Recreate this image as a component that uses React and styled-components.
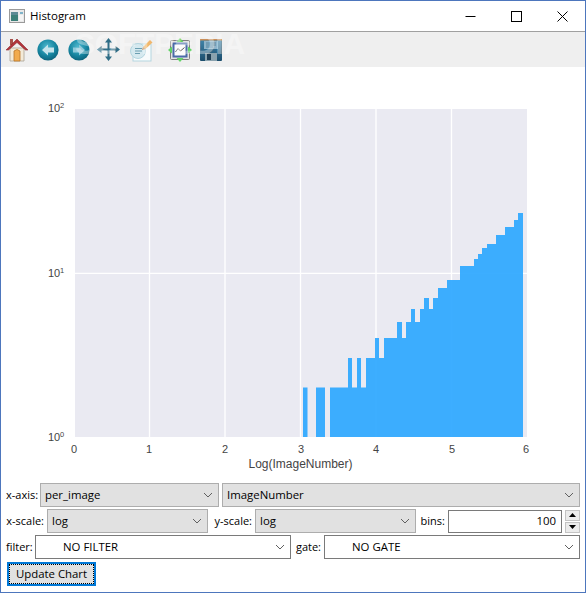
import styled, { createGlobalStyle } from 'styled-components'

const GlobalStyle = createGlobalStyle`
  html, body { margin: 0; padding: 0; background: #fff; }
  body { font-family: "Open Sans", "Noto Sans", sans-serif; font-size: 11px; color: #000; }
`

// [left edge, right edge, top] of each run of bars, read off the plot
const BARS = [
  [303, 307.5, 387.5], [316, 325, 387.5], [330, 348, 387.5], [348, 352, 358], [352, 357, 387.5],
  [357, 361, 358], [361, 366, 387.5], [366, 375, 358], [375, 379, 338], [379, 384, 358],
  [384, 397, 338], [397, 402, 322], [402, 406, 338], [406, 411, 322], [411, 415, 309],
  [415, 420, 322], [420, 424, 309], [424, 429, 298], [429, 433, 309], [433, 438, 298],
  [438, 447, 288], [447, 460, 280], [460, 474, 266], [474, 478, 259], [478, 482, 254],
  [482, 487, 248], [487, 496, 244], [496, 505, 235], [505, 514, 227], [514, 518, 220],
  [518, 523, 213],
]
const GRID_X = [149.5, 225, 300.5, 376, 451.5]
const X_LABELS = [[74, 0], [149, 1], [225, 2], [301, 3], [376, 4], [452, 5], [526, 6]]
const PLOT_BOTTOM = 437

const Window = styled.div`
  width: 586px;
  height: 593px;
  box-sizing: border-box;
  border: 1px solid #4d76bd;
  display: flex;
  flex-direction: column;
  position: relative;
  overflow: hidden;
  background: #fff;
`

const TitleBar = styled.div`
  height: 30px;
  flex: none;
  display: flex;
  align-items: center;
  padding-left: 8px;
  border-bottom: 1px solid #a0a0a0;
  background: #fff;
`

const TitleText = styled.div`
  margin-left: 5px;
  padding-bottom: 1px;
  font-size: 11.5px;
  color: #000;
`

const WinButtons = styled.div`
  margin-left: auto;
  display: flex;
  height: 100%;
`

const WinButton = styled.div`
  width: 46px;
  display: flex;
  align-items: center;
  justify-content: center;
`

const Toolbar = styled.div`
  height: 35px;
  flex: none;
  display: flex;
  align-items: center;
  background: #efefef;
`

const ToolButton = styled.div`
  width: 31px;
  height: 35px;
  display: flex;
  align-items: center;
  justify-content: center;
`

const ToolSep = styled.div`
  width: 8px;
`

const Watermark = styled.div`
  position: absolute;
  left: 74px;
  top: 26px;
  font-family: "Liberation Sans", sans-serif;
  font-weight: 700;
  font-size: 30px;
  letter-spacing: -0.2px;
  color: #fff;
  opacity: 0.35;
  pointer-events: none;
`

const ChartPane = styled.div`
  height: 416px;
  flex: none;
  background: #fff;
`

const ChartSvg = styled.svg`
  display: block;
  font-family: "Liberation Sans", sans-serif;
`

const Controls = styled.div`
  display: flex;
  flex-direction: column;
  gap: 2px;
  padding: 0 5px;
`

const Row = styled.div`
  display: grid;
  grid-template-columns: ${p => p.$cols};
  column-gap: 3px;
  height: 24px;
  align-items: center;
`

const Label = styled.div`
  text-align: right;
  white-space: nowrap;
  padding-bottom: 1px;
`

const Combo = styled.div`
  height: 24px;
  box-sizing: border-box;
  display: flex;
  align-items: center;
  justify-content: space-between;
  padding: 0 5px 1px ${p => (p.$editable ? '27px' : '4px')};
  background: ${p => (p.$editable ? '#fff' : '#e1e1e1')};
  border: 1px solid ${p => (p.$editable ? '#7a7a7a' : '#adadad')};
  font-size: 11.4px;
`

const NumberInput = styled.div`
  height: 23px;
  box-sizing: border-box;
  display: flex;
  align-items: center;
  justify-content: flex-end;
  padding: 0 5px 1px 0;
  border: 1px solid #7a7a7a;
  background: #fff;
  font-size: 11.4px;
`

const Spin = styled.div`
  height: 23px;
  display: flex;
  flex-direction: column;
  gap: 1px;
`

const SpinButton = styled.div`
  flex: 1;
  box-sizing: border-box;
  display: flex;
  align-items: center;
  justify-content: center;
  background: #ececec;
  border: 1px solid #c4c4c4;
`

const UpdateButton = styled.button`
  width: 89px;
  height: 24px;
  margin: 1px 0 0 1px;
  padding: 0 0 1px;
  box-sizing: border-box;
  border: 2px solid #0078d7;
  outline: 1px dotted #000;
  outline-offset: -3px;
  background: #e1e1e1;
  font-family: inherit;
  font-size: 11.4px;
  color: #000;
`

function Chevron() {
  return (
    <svg width="10" height="6" viewBox="0 0 10 6">
      <path d="M1 1 L5 5 L9 1" fill="none" stroke="#606060" strokeWidth="1" />
    </svg>
  )
}

function AppIcon() {
  return (
    <svg width="16" height="14" viewBox="0 0 16 14">
      <rect x="0.5" y="0.5" width="15" height="13" fill="#e8e8e8" stroke="#9a9a9a" />
      <rect x="2" y="3" width="7" height="9" fill="#3c7f78" />
      <rect x="2" y="3" width="7" height="3" fill="#5d8a94" />
      <rect x="11" y="3" width="3" height="2" fill="#7fb3c9" />
      <rect x="10" y="6" width="4" height="6" fill="#f4f4f4" />
    </svg>
  )
}

function HomeIcon() {
  return (
    <svg width="24" height="25" viewBox="0 0 24 25">
      <rect x="5" y="2" width="3" height="6" fill="#a8504a" />
      <path d="M5 11 H19 V24 H5 Z" fill="#f3ead8" stroke="#a9a294" strokeWidth="0.8" />
      <path d="M9 24 V14 Q12 11 15 14 V24 Z" fill="#f2ab4c" stroke="#b9762b" strokeWidth="0.8" />
      <path d="M1 13 L12 2 L23 13 L20.5 13 L12 5.5 L3.5 13 Z" fill="#b2333a" stroke="#8c2b30" strokeWidth="0.6" />
    </svg>
  )
}

function ArrowBall({ dir, id }) {
  const arrow = dir === 'left'
    ? 'M5 11 L11 5.5 V8.5 H17 V13.5 H11 V16.5 Z'
    : 'M17 11 L11 5.5 V8.5 H5 V13.5 H11 V16.5 Z'
  return (
    <svg width="22" height="22" viewBox="0 0 22 22">
      <defs>
        <radialGradient id={id} cx="45%" cy="35%" r="70%">
          <stop offset="0%" stopColor="#4fb9cf" />
          <stop offset="60%" stopColor="#15849f" />
          <stop offset="100%" stopColor="#0b5c75" />
        </radialGradient>
      </defs>
      <circle cx="11" cy="11" r="10.6" fill={`url(#${id})`} />
      <path d={arrow} fill={dir === 'left' ? '#c5e4ec' : '#8fc9da'} />
    </svg>
  )
}

function MoveIcon() {
  return (
    <svg width="23" height="23" viewBox="1 0 23 23" overflow="visible">
      <path d="M11.5 3 V20 M3 11.5 H20" stroke="#2f6d86" strokeWidth="2" />
      <path d="M11.5 0 L15 4.5 H8 Z M11.5 23 L15 18.5 H8 Z M0 11.5 L4.5 8 V15 Z M23 11.5 L18.5 8 V15 Z" fill="#2f6d86" />
    </svg>
  )
}

function EditIcon() {
  return (
    <svg width="24" height="24" viewBox="0 0 24 24">
      <rect x="4" y="6" width="18" height="17" fill="#f7fbfc" stroke="#b5d6e0" />
      <circle cx="9" cy="13" r="7.5" fill="#d5e9ef" stroke="#b3d6e0" />
      <path d="M6 10.5 H13 M6 13 H13 M6 15.5 H11" stroke="#6c9fb2" strokeWidth="1.1" />
      <path d="M14 9 L21 2 L23.5 4.5 L16.5 11 Z" fill="#f0b66c" />
      <path d="M14 9 L16.5 11 L13 12 Z" fill="#c98f56" />
    </svg>
  )
}

function GraphIcon() {
  return (
    <svg width="24" height="24" viewBox="0 0 24 24">
      <rect x="2.5" y="2.5" width="19" height="19" rx="1" fill="#e3e3e3" stroke="#7f7f7f" />
      <rect x="4.5" y="4.5" width="15" height="15" fill="#4a6ba8" />
      <rect x="6.5" y="6.5" width="11" height="11" fill="#fbfbfb" />
      <path d="M7.5 14 L10 10.5 L12.5 13 L16.5 9.5" fill="none" stroke="#5a5a5a" strokeWidth="1" />
      <path d="M12 0 L15.5 4 H8.5 Z M12 24 L15.5 20 H8.5 Z M0 12 L4 8.5 V15.5 Z M24 12 L20 8.5 V15.5 Z" fill="#62d466" />
    </svg>
  )
}

function SaveIcon() {
  return (
    <svg width="24" height="24" viewBox="0 0 24 24">
      <defs>
        <linearGradient id="disk" x1="0" y1="0" x2="0" y2="1">
          <stop offset="0%" stopColor="#4287ac" />
          <stop offset="100%" stopColor="#1b4d6c" />
        </linearGradient>
      </defs>
      <path d="M1 2 Q1 1 2 1 H22 Q23 1 23 2 V22 Q23 23 22 23 H2 Q1 23 1 22 Z" fill="url(#disk)" />
      <rect x="1" y="1" width="22" height="1.5" fill="#c98f5a" />
      <rect x="5" y="3" width="14" height="8" fill="#8fb4c9" />
      <path d="M7 5 H17 M7 7 H17 M7 9 H14" stroke="#4f7f9a" strokeWidth="0.9" />
      <rect x="6" y="15" width="12" height="8" fill="#8aa2ae" />
      <rect x="8" y="16" width="4" height="6" fill="#1f3f55" />
    </svg>
  )
}

function Histogram() {
  const d = BARS.map(([l, r, t]) => `M${l} ${PLOT_BOTTOM}V${t}H${r}V${PLOT_BOTTOM}Z`).join('')
  return (
    <ChartSvg width="584" height="416" viewBox="1 67 584 416">
      <rect x="75" y="109" width="452" height="328" fill="#eaeaf2" />
      {GRID_X.map(x => (
        <line key={x} x1={x} x2={x} y1="109" y2="437" stroke="#fff" strokeWidth="1.3" />
      ))}
      <line x1="75" x2="527" y1="273.3" y2="273.3" stroke="#fff" strokeWidth="1.3" />
      <path d={d} fill="#2ea8ff" fillOpacity="0.93" />
      {X_LABELS.map(([x, v]) => (
        <text key={v} x={x} y="453" fontSize="11" fill="#444" textAnchor="middle">{v}</text>
      ))}
      {[[112, 2], [277, 1], [441, 0]].map(([y, e]) => (
        <g key={e} fill="#444">
          <text x="48" y={y} fontSize="11">10</text>
          <text x="60" y={y - 4} fontSize="7.5">{e}</text>
        </g>
      ))}
      <text x="300.5" y="468" fontSize="12" fill="#444" textAnchor="middle">Log(ImageNumber)</text>
    </ChartSvg>
  )
}

export default function App() {
  return (
    <Window>
      <GlobalStyle />
      <TitleBar>
        <AppIcon />
        <TitleText>Histogram</TitleText>
        <WinButtons>
          <WinButton>
            <svg width="11" height="11" viewBox="0 0 11 11"><path d="M0.5 5.5 H10.5" stroke="#000" /></svg>
          </WinButton>
          <WinButton>
            <svg width="11" height="11" viewBox="0 0 11 11"><rect x="0.5" y="0.5" width="10" height="10" fill="none" stroke="#000" /></svg>
          </WinButton>
          <WinButton>
            <svg width="11" height="11" viewBox="0 0 11 11"><path d="M0.5 0.5 L10.5 10.5 M10.5 0.5 L0.5 10.5" stroke="#000" /></svg>
          </WinButton>
        </WinButtons>
      </TitleBar>

      <Toolbar>
        <ToolButton><HomeIcon /></ToolButton>
        <ToolButton><ArrowBall dir="left" id="backBall" /></ToolButton>
        <ToolButton><ArrowBall dir="right" id="fwdBall" /></ToolButton>
        <ToolButton><MoveIcon /></ToolButton>
        <ToolButton><EditIcon /></ToolButton>
        <ToolSep />
        <ToolButton><GraphIcon /></ToolButton>
        <ToolButton><SaveIcon /></ToolButton>
      </Toolbar>
      <Watermark>SOFTPEDIA</Watermark>

      <ChartPane>
        <Histogram />
      </ChartPane>

      <Controls>
        <Row $cols="31px 179px 1fr">
          <Label>x-axis:</Label>
          <Combo>per_image<Chevron /></Combo>
          <Combo>ImageNumber<Chevron /></Combo>
        </Row>
        <Row $cols="38px 161px 41px 161px 26px 114px 15px">
          <Label>x-scale:</Label>
          <Combo>log<Chevron /></Combo>
          <Label>y-scale:</Label>
          <Combo>log<Chevron /></Combo>
          <Label>bins:</Label>
          <NumberInput>100</NumberInput>
          <Spin>
            <SpinButton>
              <svg width="7" height="4" viewBox="0 0 7 4"><path d="M3.5 0 L7 4 H0 Z" fill="#000" /></svg>
            </SpinButton>
            <SpinButton>
              <svg width="7" height="4" viewBox="0 0 7 4"><path d="M3.5 4 L7 0 H0 Z" fill="#000" /></svg>
            </SpinButton>
          </Spin>
        </Row>
        <Row $cols="26px 256px 27px 256px">
          <Label>filter:</Label>
          <Combo $editable>NO FILTER<Chevron /></Combo>
          <Label>gate:</Label>
          <Combo $editable>NO GATE<Chevron /></Combo>
        </Row>
        <Row $cols="auto 1fr">
          <UpdateButton>Update Chart</UpdateButton>
        </Row>
      </Controls>
    </Window>
  )
}
